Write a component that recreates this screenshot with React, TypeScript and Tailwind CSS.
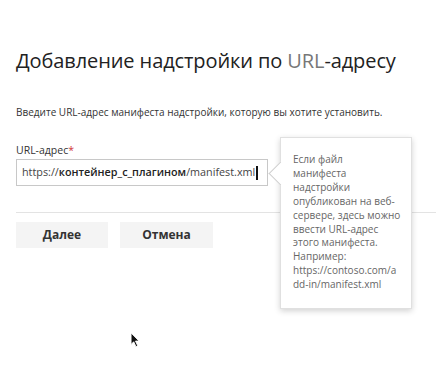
import React from 'react'

export default function App() {
  return (
    <div
      className="relative h-[392px] w-[436px] overflow-hidden bg-white text-[#333]"
      style={{ fontFamily: '"Open Sans", "Noto Sans", sans-serif' }}
    >
      <div className="pl-4 pt-[47px]">
        <h1 className="text-[20px] leading-[28px] font-normal text-[#222] tracking-[-0.1px]">
          Добавление надстройки по <span className="text-[#777]">URL</span>-адресу
        </h1>
        <p className="mt-[30px] text-[10px] leading-[14px] text-[#333]">
          Введите URL-адрес манифеста надстройки, которую вы хотите установить.
        </p>

        <div className="relative mt-[24px]">
          <label className="block text-[10.5px] leading-[14px] text-[#333]">
            URL-адрес<span className="text-[#d13438]">*</span>
          </label>
          <div className="mt-[2px] flex h-[27px] w-[252px] items-center border border-[#c8c8c8] bg-white pl-[5px] text-[10.8px] text-[#444]">
            <span>https://</span>
            <span className="font-semibold text-[#222]">контейнер_с_плагином</span>
            <span>/manifest.xml</span>
            <span className="ml-[1px] h-[14px] w-[2px] bg-[#111]" />
          </div>

          <div className="mt-[26px] h-px bg-[#e3e3e3]" />

          <div className="mt-[9px] flex gap-3">
            <button className="h-[26px] w-[92px] bg-[#f4f4f4] text-[12px] font-bold text-[#333]">
              Далее
            </button>
            <button className="h-[26px] w-[93px] bg-[#f4f4f4] text-[12px] font-bold text-[#333]">
              Отмена
            </button>
          </div>

          <div className="absolute left-[264px] top-[-6px] w-[132px] border border-[#e0e0e0] bg-white pt-[15px] pb-[16px] pl-[12px] pr-[4px] shadow-[0_2px_6px_rgba(0,0,0,0.18)]">
            <div className="absolute left-[-9px] top-[27px] h-[17px] w-[17px] rotate-45 border-b border-l border-[#cfcfcf] bg-white" />
            <p className="relative text-[10px] leading-[13.9px] text-[#666]">
              Если файл
              <br />
              манифеста
              <br />
              надстройки
              <br />
              опубликован на веб-
              <br />
              сервере, здесь можно
              <br />
              ввести URL-адрес
              <br />
              этого манифеста.
              <br />
              Например:
              <br />
              https://contoso.com/a
              <br />
              dd-in/manifest.xml
            </p>
          </div>
        </div>
      </div>

      <svg className="absolute left-[130px] top-[332px]" width="11" height="16" viewBox="0 0 12 18">
        <path d="M1 1 L1 14 L4 11 L6.5 16.5 L8.5 15.6 L6 10.2 L10 10.2 Z" fill="#111" stroke="#fff" strokeWidth="1" />
      </svg>
    </div>
  )
}
